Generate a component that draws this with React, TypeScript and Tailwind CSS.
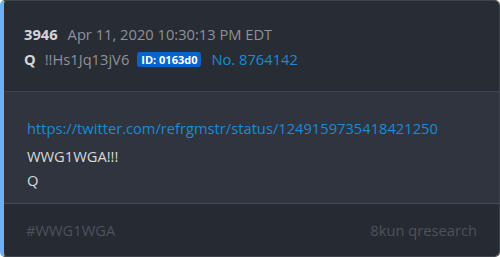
const App = () => {
    return (
        <div className="w-[500px] h-[257px] bg-white font-['Open_Sans',sans-serif]">
            <div className="h-full flex flex-col rounded-[5px] overflow-hidden border border-[#3e434c] border-l-4 border-l-[#6cb0f5]">
                {/* Header */}
                <div className="h-[90px] bg-[#282c34] pl-[20px] pt-[21px] text-[14.7px] leading-[25px]">
                    <div className="flex items-center">
                        <span className="font-bold text-[#d4d5d8]">3946</span>
                        <span className="ml-[10px] text-[#8e9299]">Apr 11, 2020 10:30:13 PM EDT</span>
                    </div>
                    <div className="flex items-center">
                        <span className="font-bold text-[#d4d5d8]">Q</span>
                        <span className="ml-[9px] text-[#8e9299]">!!Hs1Jq13jV6</span>
                        <span className="ml-[8px] h-[15px] px-[4px] rounded-[3px] bg-[#0a63c9] text-white text-[11px] font-bold leading-[15px]">
                            ID: 0163d0
                        </span>
                        <span className="ml-[10px] text-[#1c8ad6]">No. 8764142</span>
                    </div>
                </div>
                <div className="h-px bg-[#3e434c]" />

                {/* Body */}
                <div className="h-[111px] bg-[#2f343e] pl-[23px] pt-[24px] text-[14.7px] leading-[24px] text-[#d8d9db]">
                    <div className="mb-[4px] text-[#1c8ad6]">https://twitter.com/refrgmstr/status/1249159735418421250</div>
                    <div>WWG1WGA!!!</div>
                    <div>Q</div>
                </div>
                <div className="h-px bg-[#454a53]" />

                {/* Footer */}
                <div className="flex-1 bg-[#262a32] pl-[22px] pr-[22px] flex items-center justify-between text-[14.7px] text-[#4d525b]">
                    <span>#WWG1WGA</span>
                    <span>8kun qresearch</span>
                </div>
            </div>
        </div>
    );
};

export default App;
